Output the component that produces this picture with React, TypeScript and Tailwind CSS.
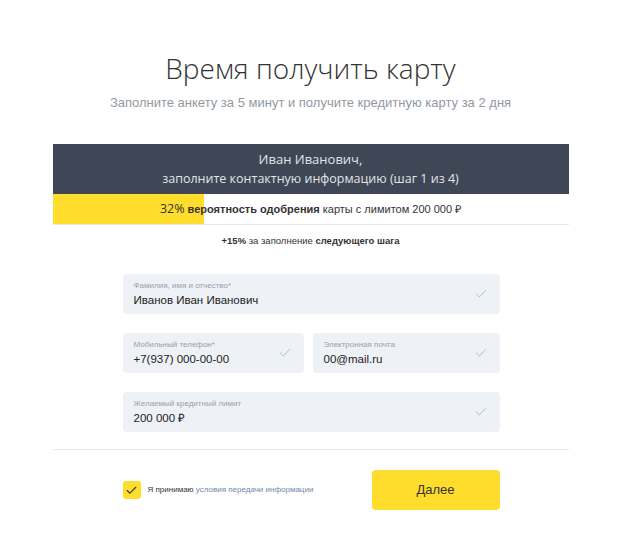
import { Check } from "lucide-react";

const sans = "font-['Liberation_Sans',Arial,sans-serif]";
const light = "font-['Open_Sans','Noto_Sans',sans-serif]";

function Field({ label, value, className = "" }: { label: string; value: React.ReactNode; className?: string }) {
  return (
    <div className={`relative flex h-10 items-center rounded-[4px] bg-[#eef1f5] pl-[11px] pr-3 ${className}`}>
      <div className="flex-1">
        <div className="text-[8px] leading-[10px] text-[#9aa1ab]">{label}</div>
        <div className="mt-[2px] text-[11.5px] leading-[14px] text-[#222]">{value}</div>
      </div>
      <Check className="h-[14px] w-[14px] text-[#8ec6b4]" strokeWidth={1.5} />
    </div>
  );
}

export default function App() {
  return (
    <div className={`min-h-[533px] w-full bg-white ${sans}`}>
      <div className="pt-[49px] text-center">
        <h1 className={`${light} text-[28px] font-light leading-[38px] text-[#333]`}>Время получить карту</h1>
        <p className="mt-[8px] text-[13px] leading-[16px] text-[#9299a2]">
          Заполните анкету за 5 минут и получите кредитную карту за 2 дня
        </p>
      </div>

      <div className="mx-auto mt-[33px] w-[516px]">
        <div className={`${light} flex h-[50px] flex-col items-center justify-center bg-[#3f4756] text-[12.5px] leading-[20px] text-[#e1e4e8]`}>
          <div className="text-[13px]">Иван Иванович,</div>
          <div>заполните контактную информацию (шаг 1 из 4)</div>
        </div>

        <div className="relative flex h-[31px] items-center justify-center border-b border-[#e8e8e8] text-[11px] text-[#333]">
          <div className="absolute inset-y-0 left-0 w-[151px] bg-[#ffdd2d]" />
          <span className="relative">
            <span className={`${light} text-[12.5px]`}>32%</span> <b>вероятность одобрения</b> карты с лимитом 200 000 ₽
          </span>
        </div>

        <div className="mt-[9px] text-center text-[9.5px] leading-[14px] text-[#333]">
          <b>+15%</b> за заполнение <b>следующего шага</b>
        </div>

        <div className="ml-[70px] mt-[26px] flex w-[377px] flex-col gap-[19px]">
          <Field label="Фамилия, имя и отчество*" value="Иванов Иван Иванович" />
          <div className="flex gap-[9px]">
            <Field label="Мобильный телефон*" value="+7(937) 000-00-00" className="w-[181px]" />
            <Field label="Электронная почта" value="00@mail.ru" className="flex-1" />
          </div>
          <Field label="Желаемый кредитный лимит" value="200 000 ₽" />
        </div>

        <div className="mt-[17px] border-t border-[#e8e8e8]" />

        <div className="ml-[70px] mt-[20px] flex w-[377px] items-center justify-between">
          <div className="flex items-center gap-[7px]">
            <div className="flex h-[18px] w-[18px] items-center justify-center rounded-[3px] bg-[#ffdd2d]">
              <Check className="h-[13px] w-[13px] text-[#333]" strokeWidth={2} />
            </div>
            <span className="text-[8px] text-[#333]">
              Я принимаю <span className="text-[#6f8aa8]">условия передачи информации</span>
            </span>
          </div>
          <button className="h-10 w-[128px] rounded-[4px] bg-[#ffdd2d] text-[13px] text-[#333]">Далее</button>
        </div>
      </div>
    </div>
  );
}
